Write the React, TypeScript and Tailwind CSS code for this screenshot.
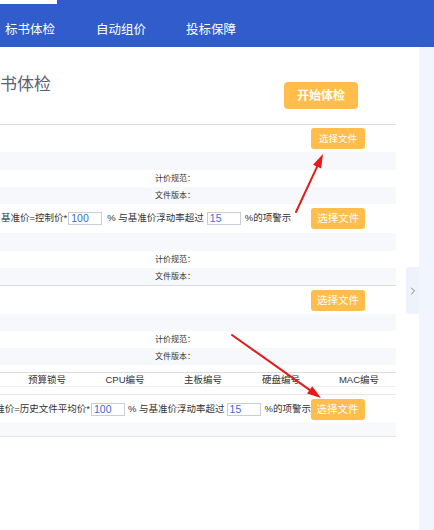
import { ChevronRight } from 'lucide-react';

const font = { fontFamily: '"Liberation Sans", "Noto Sans CJK SC", sans-serif' };

function FileButton({ small }: { small?: boolean }) {
  return (
    <button
      className={`w-[54px] h-[21px] shrink-0 rounded-[3px] bg-[#ffbd4b] text-white leading-[21px] text-center ${
        small ? 'text-[9.5px]' : 'text-[10.5px]'
      }`}
    >
      选择文件
    </button>
  );
}

function NumBox({ value }: { value: string }) {
  return (
    <div className="w-[34px] h-[13px] shrink-0 border border-[#c9cdd4] bg-white text-[#3d6ad6] text-[10.5px] leading-[11px] pl-[2px]">
      {value}
    </div>
  );
}

function InfoRows() {
  return (
    <>
      <div className="h-[17px] bg-white pl-[155px] text-[8px] leading-[17px] text-[#333]">计价规范：</div>
      <div className="h-[17px] bg-[#f6f8fc] pl-[155px] text-[8px] leading-[17px] text-[#333]">文件版本：</div>
    </>
  );
}

export default function App() {
  return (
    <div className="relative w-[434px] h-[530px] overflow-hidden bg-white" style={font}>
      {/* top nav */}
      <div className="relative h-[47px] bg-[#305dcb] flex items-start pt-[21px] text-white text-[12.5px] leading-[18px]">
        <div className="absolute left-0 top-0 w-[57px] h-[4px] bg-white" />
        <span className="ml-[5px] w-[91px]">标书体检</span>
        <span className="w-[90px]">自动组价</span>
        <span>投标保障</span>
      </div>

      <div className="flex h-[483px]">
        {/* main panel */}
        <div className="w-[396px] shrink-0">
          <div className="h-[77px] flex items-start justify-between pr-[38px]">
            <h1 className="mt-[28px] text-[17px] leading-[20px] text-[#5c6173] font-normal">书体检</h1>
            <button className="mt-[35px] w-[74px] h-[27px] rounded-[4px] bg-[#ffbe4c] text-white text-[12px] font-bold">
              开始体检
            </button>
          </div>

          <div className="border-t border-[#dcdcdc]" />
          <div className="h-[27px] flex items-center justify-end pr-[31px]">
            <FileButton small />
          </div>
          <div className="h-[18px] bg-[#f6f8fc]" />
          <InfoRows />

          <div className="h-[29px] flex items-center whitespace-nowrap text-[9.5px] text-[#333]">
            <span className="ml-[1px] shrink-0">基准价=控制价*</span>
            <span className="ml-[1px]">
              <NumBox value="100" />
            </span>
            <span className="ml-[5px] shrink-0">% 与基准价浮动率超过</span>
            <span className="ml-[3px]">
              <NumBox value="15" />
            </span>
            <span className="ml-[4px] shrink-0">%的项警示</span>
            <span className="ml-[20px]">
              <FileButton />
            </span>
          </div>
          <div className="h-[18px] bg-[#f6f8fc]" />
          <InfoRows />

          <div className="border-t border-[#dcdcdc]" />
          <div className="h-[28px] flex items-center justify-end pr-[31px]">
            <FileButton />
          </div>
          <div className="h-[17px] bg-[#f6f8fc]" />
          <InfoRows />
          <div className="h-[7px]" />

          <div className="border-t border-[#dcdcdc]" />
          <div className="h-[13px] grid grid-cols-[78px_78px_78px_78px_78px] pl-[8px] text-[9.5px] leading-[13px] text-[#333] text-center">
            <span>预算锁号</span>
            <span>CPU编号</span>
            <span>主板编号</span>
            <span>硬盘编号</span>
            <span>MAC编号</span>
          </div>
          <div className="h-[8px] border-t border-[#eeeeee]" />
          <div className="border-t border-[#e6e6e6]" />

          <div className="h-[28px] flex items-center whitespace-nowrap text-[9.5px] text-[#333]">
            <span className="ml-[-21px] w-[111px] shrink-0 text-right">基准价=历史文件平均价*</span>
            <span className="ml-[1px]">
              <NumBox value="100" />
            </span>
            <span className="ml-[3px] shrink-0">% 与基准价浮动率超过</span>
            <span className="ml-[2px]">
              <NumBox value="15" />
            </span>
            <span className="ml-[4px] w-[46px] shrink-0">%的项警示</span>
            <FileButton />
          </div>
          <div className="h-[13px] bg-[#f8f9fb]" />
          <div className="border-t border-[#e4e4e4]" />
        </div>

        {/* collapse handle */}
        <div className="w-[23px] shrink-0">
          <div className="ml-[10px] mt-[220px] w-[13px] h-[47px] rounded-l-[3px] bg-[#eef2fb] flex items-center justify-center text-[#666]">
            <ChevronRight size={12} strokeWidth={1.6} />
          </div>
        </div>

        <div className="w-[15px] shrink-0 bg-[#f2f5fd]" />
      </div>

      {/* annotation arrows */}
      <svg className="absolute left-0 top-0 pointer-events-none" width="434" height="530">
        <line x1="296" y1="212" x2="317.1" y2="166.7" stroke="#e31b1b" strokeWidth="2" strokeLinecap="round" />
        <polygon points="323,154 321.2,168.6 313,164.8" fill="#e31b1b" />
        <line x1="232" y1="335" x2="309.6" y2="389.9" stroke="#e31b1b" strokeWidth="2" strokeLinecap="round" />
        <polygon points="321,398 307,393.6 312.2,386.2" fill="#e31b1b" />
      </svg>
    </div>
  );
}
